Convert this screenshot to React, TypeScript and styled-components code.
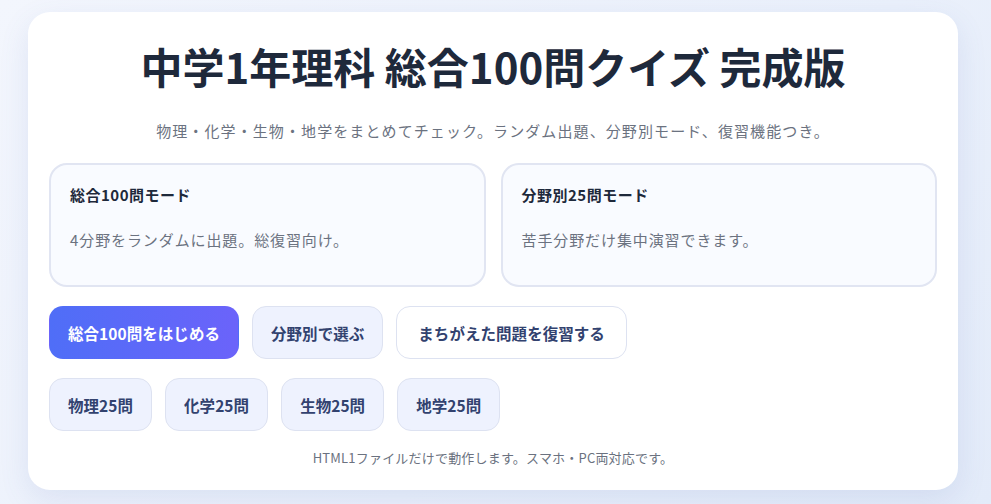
import React from 'react'
import styled, { createGlobalStyle } from 'styled-components'

const GlobalStyle = createGlobalStyle`
  html, body {
    margin: 0;
    padding: 0;
  }
  body {
    min-height: 504px;
    background: linear-gradient(135deg, #f3f6fd 0%, #eaf0fb 60%, #e3ebf9 100%);
    font-family: "Noto Sans CJK JP", "Noto Sans", sans-serif;
    color: #1f2a3d;
  }
`

const Page = styled.div`
  padding: 12px 0 14px 28px;
`

const Card = styled.main`
  width: 930px;
  box-sizing: border-box;
  background: #fff;
  border-radius: 22px;
  padding: 29px 21px 22px;
  box-shadow: 0 10px 30px rgba(80, 110, 180, 0.12);
`

const Title = styled.h1`
  margin: 0;
  text-align: center;
  font-size: 42px;
  line-height: 50px;
  font-weight: 700;
  color: #1e293b;
`

const Subtitle = styled.p`
  margin: 28px 0 0;
  text-align: center;
  font-size: 15px;
  line-height: 24px;
  color: #6b7280;
  letter-spacing: 1.1px;
`

const ModeGrid = styled.div`
  display: grid;
  grid-template-columns: 1fr 1fr;
  gap: 15px;
  margin-top: 20px;
`

const ModeCard = styled.section`
  border: 2px solid #e1e5f2;
  border-radius: 18px;
  background: #f9fbff;
  padding: 18px 19px 33px;
`

const ModeTitle = styled.h2`
  margin: 0;
  font-size: 15px;
  line-height: 24px;
  font-weight: 700;
  color: #1e293b;
  letter-spacing: 0.5px;
`

const ModeText = styled.p`
  margin: 21px 0 0;
  font-size: 15px;
  line-height: 24px;
  color: #6b7280;
  letter-spacing: 0.9px;
`

const ButtonRow = styled.div`
  display: flex;
  flex-wrap: wrap;
  gap: 13px;
  margin-top: 19px;
`

const Button = styled.button<{ $variant?: 'primary' | 'soft' | 'outline' }>`
  height: 53px;
  padding: 0 ${p => (p.$variant === 'outline' ? 21 : 18)}px;
  border-radius: 14px;
  font-family: inherit;
  font-size: 15.5px;
  font-weight: 700;
  letter-spacing: 0.05px;
  cursor: pointer;
  border: 1px solid ${p => (p.$variant === 'primary' ? 'transparent' : '#dde2f1')};
  color: ${p => (p.$variant === 'primary' ? '#ffffff' : '#32426f')};
  background: ${p =>
    p.$variant === 'primary'
      ? 'linear-gradient(90deg, #4f6ef7 0%, #6b63fa 100%)'
      : p.$variant === 'outline'
      ? '#ffffff'
      : '#eef2fe'};
`

const Footer = styled.p`
  margin: 17px 0 0;
  text-align: center;
  font-size: 13px;
  line-height: 20px;
  color: #6b7280;
  letter-spacing: 0.2px;
`

const subjects = ['物理', '化学', '生物', '地学']

export default function App() {
  return (
    <Page>
      <GlobalStyle />
      <Card>
        <Title>中学1年理科 総合100問クイズ 完成版</Title>
        <Subtitle>物理・化学・生物・地学をまとめてチェック。ランダム出題、分野別モード、復習機能つき。</Subtitle>
        <ModeGrid>
          <ModeCard>
            <ModeTitle>総合100問モード</ModeTitle>
            <ModeText>4分野をランダムに出題。総復習向け。</ModeText>
          </ModeCard>
          <ModeCard>
            <ModeTitle>分野別25問モード</ModeTitle>
            <ModeText>苦手分野だけ集中演習できます。</ModeText>
          </ModeCard>
        </ModeGrid>
        <ButtonRow>
          <Button $variant="primary">総合100問をはじめる</Button>
          <Button $variant="soft">分野別で選ぶ</Button>
          <Button $variant="outline">まちがえた問題を復習する</Button>
        </ButtonRow>
        <ButtonRow>
          {subjects.map(s => (
            <Button key={s} $variant="soft">{s}25問</Button>
          ))}
        </ButtonRow>
        <Footer>HTML1ファイルだけで動作します。スマホ・PC両対応です。</Footer>
      </Card>
    </Page>
  )
}
